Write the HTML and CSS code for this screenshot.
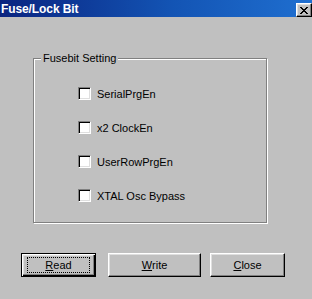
FILE: index.html
```html
<!DOCTYPE html>
<html lang="en">
<head>
    <meta charset="UTF-8">
    <title>Fuse/Lock Bit</title>
    <link rel="stylesheet" href="styles.css">
</head>
<body>
    <div class="dialog">
        <div class="title-bar">
            <span class="title-text">Fuse/Lock Bit</span>
            <button class="close-x" title="Close">
                <svg width="8" height="7" viewBox="0 0 8 7">
                    <path d="M0 0h2v1h1v1h2V1h1V0h2v1H7v1H6v1H5v1h1v1h1v1h1v1H6V6H5V5H3v1H2v1H0V6h1V5h1V4h1V3H2V2H1V1H0z" fill="#000"/>
                </svg>
            </button>
        </div>

        <div class="dialog-body">
            <div class="group">
                <span class="group-label">Fusebit Setting</span>
                <label class="check-row"><span class="check"></span>SerialPrgEn</label>
                <label class="check-row"><span class="check"></span>x2 ClockEn</label>
                <label class="check-row"><span class="check"></span>UserRowPrgEn</label>
                <label class="check-row"><span class="check"></span>XTAL Osc Bypass</label>
            </div>

            <div class="buttons">
                <button class="btn btn-default"><span class="focus"><u>R</u>ead</span></button>
                <button class="btn btn-wide"><u>W</u>rite</button>
                <button class="btn"><u>C</u>lose</button>
            </div>
        </div>
    </div>
</body>
</html>
```

FILE: styles.css
```css
body {
    margin: 0;
    background: #c0c0c0;
    font-family: "Liberation Sans", Arial, sans-serif;
    font-size: 11px;
    color: #000;
}
.dialog {
    width: 312px;
    height: 299px;
    background: #c0c0c0;
    overflow: hidden;
}
.title-bar {
    height: 17px;
    display: flex;
    align-items: center;
    justify-content: space-between;
    background: linear-gradient(to right, #0a2480 0%, #1354b4 55%, #1f6fd0 100%);
    padding-left: 1px;
}
.title-text {
    color: #fff;
    font-weight: bold;
    font-size: 12px;
    letter-spacing: -0.1px;
}
.close-x {
    width: 16px;
    height: 14px;
    margin-top: 3px;
    padding: 0;
    display: flex;
    align-items: center;
    justify-content: center;
    background: #c0c0c0;
    border: 1px solid;
    border-color: #fff #000 #000 #fff;
    box-shadow: inset -1px -1px 0 #808080, inset 1px 1px 0 #dfdfdf;
}
.dialog-body {
    padding-top: 41px;
}
.group {
    position: relative;
    margin-left: 33px;
    width: 234px;
    height: 165px;
    border: 1px solid #808080;
    box-shadow: 1px 1px 0 #fff, inset 1px 1px 0 #fff;
    padding: 28px 0 0 44px;
    box-sizing: border-box;
    display: flex;
    flex-direction: column;
    gap: 21px;
}
.group-label {
    position: absolute;
    top: -8px;
    left: 7px;
    padding: 0 2px 0 2px;
    background: #c0c0c0;
    line-height: 14px;
}
.check-row {
    display: flex;
    align-items: center;
    gap: 6px;
    height: 13px;
}
.check {
    width: 13px;
    height: 13px;
    box-sizing: border-box;
    background: #fff;
    border: 1px solid;
    border-color: #808080 #fff #fff #808080;
    box-shadow: inset 1px 1px 0 #000, inset -1px -1px 0 #dfdfdf;
}
.buttons {
    display: flex;
    margin: 30px 0 0 21px;
}
.btn {
    width: 75px;
    height: 24px;
    padding: 0;
    font-family: "Liberation Sans", Arial, sans-serif;
    font-size: 11px;
    color: #000;
    background: #c0c0c0;
    border: 1px solid;
    border-color: #fff #000 #000 #fff;
    box-shadow: inset -1px -1px 0 #808080, inset 1px 1px 0 #dfdfdf;
    display: flex;
    align-items: center;
    justify-content: center;
}
.btn-default {
    border: 1px solid #000;
    box-shadow: inset 1px 1px 0 #fff, inset -1px -1px 0 #000, inset -2px -2px 0 #808080, inset 2px 2px 0 #dfdfdf;
    margin-right: 12px;
}
.btn-default .focus {
    width: 61px;
    height: 14px;
    border: 1px dotted #000;
    display: flex;
    align-items: center;
    justify-content: center;
}
.btn-wide {
    width: 93px;
    margin-right: 9px;
}
```
